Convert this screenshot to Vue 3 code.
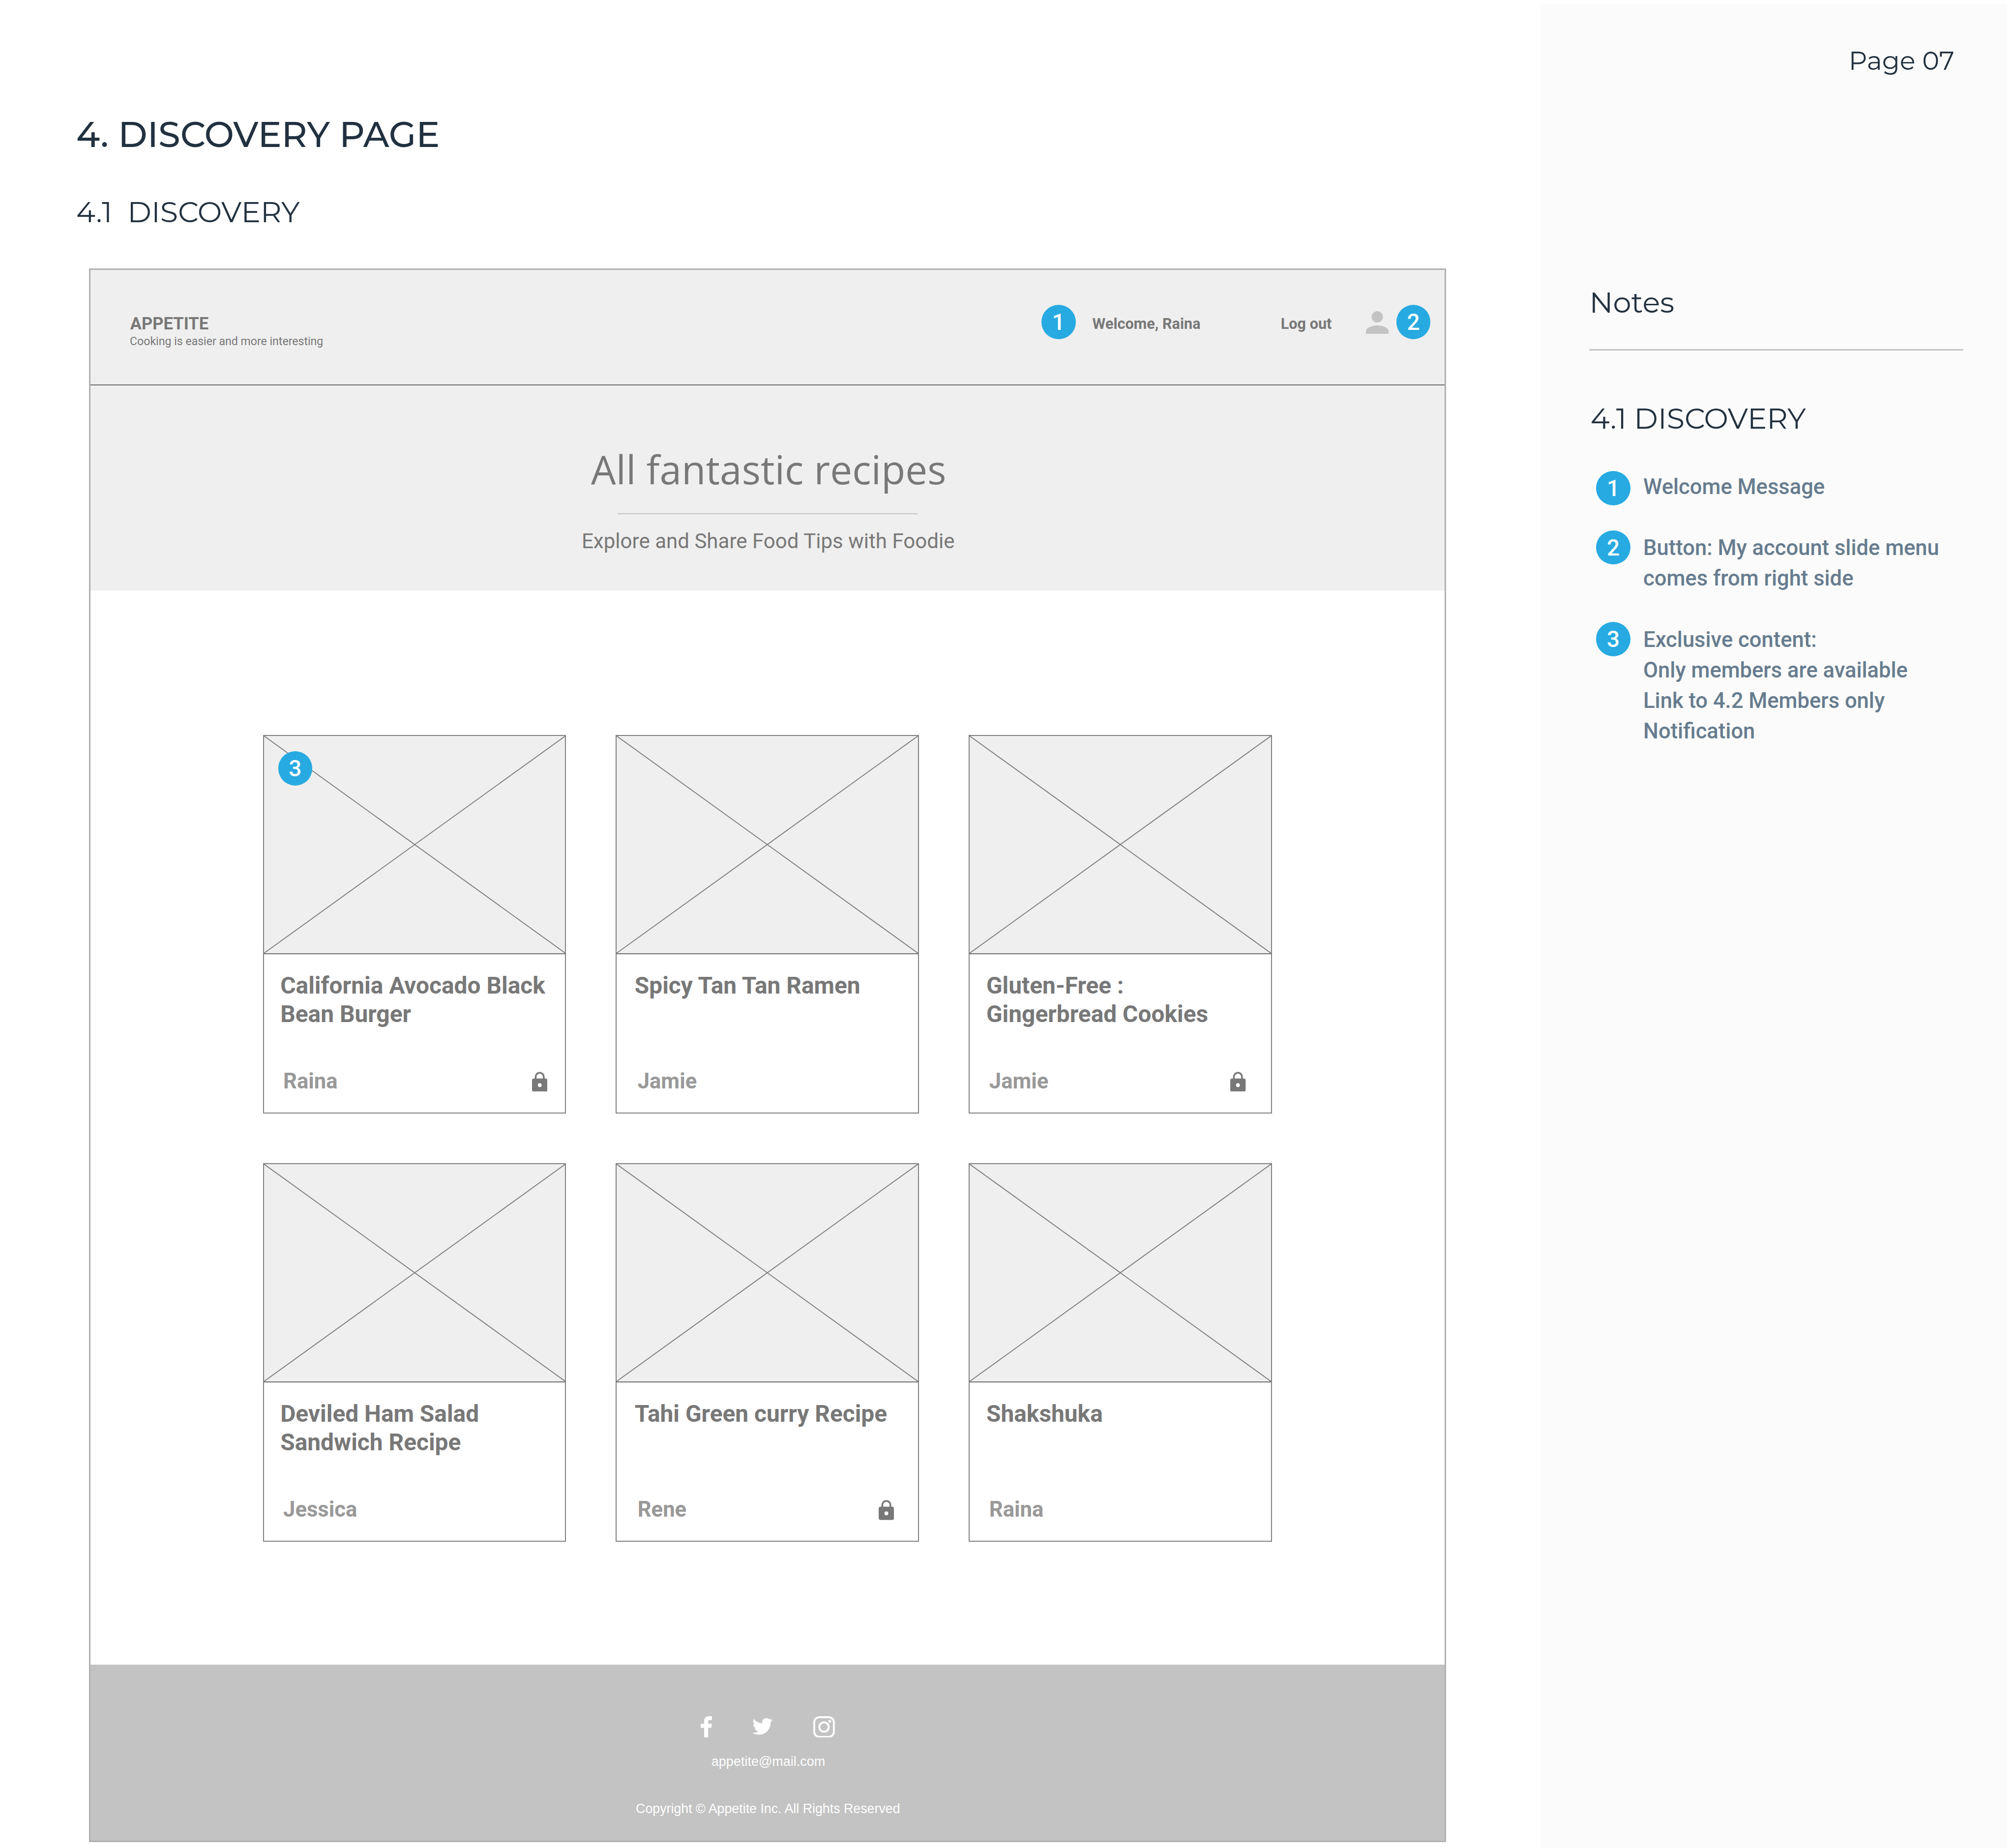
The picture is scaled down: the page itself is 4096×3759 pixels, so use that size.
<script setup>
const recipes = [
  { title: ['California Avocado Black', 'Bean Burger'], author: 'Raina', locked: true, note: 3 },
  { title: ['Spicy Tan Tan Ramen'], author: 'Jamie' },
  { title: ['Gluten-Free :', 'Gingerbread Cookies'], author: 'Jamie', locked: true },
  { title: ['Deviled Ham Salad', 'Sandwich Recipe'], author: 'Jessica' },
  { title: ['Tahi Green curry Recipe'], author: 'Rene', locked: true },
  { title: ['Shakshuka'], author: 'Raina' },
]

const notes = [
  { id: 1, lines: ['Welcome Message'] },
  { id: 2, lines: ['Button: My account slide menu', 'comes from right side'] },
  {
    id: 3,
    lines: ['Exclusive content:', 'Only members are available', 'Link to 4.2 Members only', 'Notification'],
  },
]
</script>

<template>
  <div class="sheet">
    <main class="main">
      <h1 class="title">4. DISCOVERY PAGE</h1>
      <h2 class="subtitle">4.1&nbsp; DISCOVERY</h2>

      <div class="frame">
        <header class="header">
          <div class="brand">
            <div class="brand-name">APPETITE</div>
            <div class="brand-tagline">Cooking is easier and more interesting</div>
          </div>
          <nav class="nav">
            <span class="badge">1</span>
            <span class="welcome">Welcome, Raina</span>
            <span class="logout">Log out</span>
            <svg class="person" viewBox="4 4 16 16">
              <path d="M12 12c2.21 0 4-1.79 4-4s-1.79-4-4-4-4 1.79-4 4 1.79 4 4 4zm0 2c-2.67 0-8 1.34-8 4v2h16v-2c0-2.66-5.33-4-8-4z" />
            </svg>
            <span class="badge">2</span>
          </nav>
        </header>

        <section class="hero">
          <div class="hero-title">All fantastic recipes</div>
          <div class="hero-rule"></div>
          <div class="hero-text">Explore and Share Food Tips with Foodie</div>
        </section>

        <section class="grid">
          <article v-for="(recipe, i) in recipes" :key="i" class="card">
            <div class="picture">
              <svg class="cross" viewBox="0 0 782 565" preserveAspectRatio="none">
                <path d="M0 0L782 565M782 0L0 565" />
              </svg>
              <span v-if="recipe.note" class="badge pinned">{{ recipe.note }}</span>
            </div>
            <div class="card-title">
              <div v-for="line in recipe.title" :key="line">{{ line }}</div>
            </div>
            <div class="card-foot">
              <span class="author">{{ recipe.author }}</span>
              <svg v-if="recipe.locked" class="lock" viewBox="0 0 40 52">
                <path
                  fill-rule="evenodd"
                  d="M35 17.5h-2.2V13a12.8 12.8 0 0 0-25.6 0v4.500H5a5 5 0 0 0-5 5V47a5 5 0 0 0 5 5h30a5 5 0 0 0 5-5V22.500a5 5 0 0 0-5-5zM11.800 13a8.200 8.200 0 0 1 16.400 0v4.500H11.800zM20 39.800a5 5 0 1 1 0-10 5 5 0 0 1 0 10z"
                />
              </svg>
            </div>
          </article>
        </section>

        <footer class="footer">
          <div class="social">
            <svg class="facebook" viewBox="0 0 30 56">
              <path d="M9 56V30H0V19.500H9V13C9 4.500 13.500 0 21.500 0H30V10H24.500C20.500 10 19.500 12 19.500 15V19.500H29L27.700 30H19.500V56z" />
            </svg>
            <svg class="twitter" viewBox="0 3 24 19.500">
              <path d="M23.953 4.570a10 10 0 01-2.825.775 4.958 4.958 0 002.163-2.723c-.951.555-2.005.959-3.127 1.184a4.920 4.920 0 00-8.384 4.482C7.690 8.095 4.067 6.130 1.640 3.162a4.822 4.822 0 00-.666 2.475c0 1.710.870 3.213 2.188 4.096a4.904 4.904 0 01-2.228-.616v.060a4.923 4.923 0 003.946 4.827 4.996 4.996 0 01-2.212.085 4.936 4.936 0 004.604 3.417 9.867 9.867 0 01-6.102 2.105c-.390 0-.779-.023-1.170-.067a13.995 13.995 0 007.557 2.209c9.053 0 13.998-7.496 13.998-13.985 0-.210 0-.420-.015-.630A9.935 9.935 0 0024 4.590z" />
            </svg>
            <svg class="instagram" viewBox="0 0 56 56">
              <rect x="2.500" y="2.500" width="51" height="51" rx="13" />
              <circle cx="28" cy="28" r="12.200" />
              <circle class="dot" cx="43" cy="13" r="3.600" />
            </svg>
          </div>
          <div class="mail">appetite@mail.com</div>
          <div class="copyright">Copyright © Appetite Inc. All Rights Reserved</div>
        </footer>
      </div>
    </main>

    <aside class="side">
      <div class="page-number">Page 07</div>
      <div class="notes-title">Notes</div>
      <div class="notes-rule"></div>
      <div class="notes-section">4.1 DISCOVERY</div>
      <ul class="notes">
        <li v-for="note in notes" :key="note.id" class="note">
          <span class="badge">{{ note.id }}</span>
          <div class="note-text">
            <div v-for="line in note.lines" :key="line">{{ line }}</div>
          </div>
        </li>
      </ul>
    </aside>
  </div>
</template>

<style>
html {
  font-size: 78.2875px;
}
body {
  margin: 0;
  background: #fff;
}
</style>

<style scoped>
.sheet {
  display: flex;
  width: 52.32rem;
  height: 3759px;
  overflow: hidden;
  background: #fff;
  font-family: Roboto, sans-serif;
  white-space: nowrap;
}
.sheet * {
  box-sizing: border-box;
}
.main {
  flex: none;
  width: 40.02rem;
  padding-left: 1.98rem;
}
.title,
.subtitle,
.page-number,
.notes-title,
.notes-section {
  margin: 0;
  color: #22313f;
  font-family: Montserrat, sans-serif;
  font-weight: 400;
  line-height: 1rem;
}
.title {
  margin-top: 2.985rem;
  font-size: 0.919rem;
  font-weight: 500;
}
.subtitle {
  margin-top: 1.02rem;
  font-size: 0.754rem;
}
.frame {
  width: 35.26rem;
  height: 40.89rem;
  margin-top: 0.965rem;
  margin-left: 0.33rem;
  border: 0.04rem solid #b0b0b0;
  color: #787878;
}

.badge {
  flex: none;
  display: block;
  width: 0.89rem;
  height: 0.89rem;
  border-radius: 50%;
  background: #27aae1;
  color: #fff;
  font-size: 0.586rem;
  font-weight: 500;
  line-height: 0.905rem;
  text-align: center;
}

.header {
  display: flex;
  justify-content: space-between;
  height: 3.01rem;
  padding-right: 0.37rem;
  padding-left: 1.035rem;
  border-bottom: 0.03rem solid #707070;
  background: #efefef;
}
.brand {
  padding-top: 1.15rem;
}
.brand-name {
  font-size: 0.441rem;
  font-weight: 700;
  line-height: 0.5rem;
}
.brand-tagline {
  margin-top: 0.015rem;
  margin-left: -0.01rem;
  font-size: 0.295rem;
  line-height: 0.4rem;
}
.nav {
  display: flex;
  height: 0.89rem;
  margin-top: 0.91rem;
  font-size: 0.391rem;
  font-weight: 700;
  line-height: 1rem;
}
.welcome {
  width: 4.895rem;
  margin-left: 0.435rem;
}
.logout {
  width: 2.21rem;
}
.person {
  width: 0.59rem;
  height: 0.59rem;
  margin-top: 0.165rem;
  margin-right: 0.2rem;
  fill: #c3c3c3;
}

.hero {
  height: 5.32rem;
  padding-top: 1.46rem;
  background: #efefef;
  text-align: center;
}
.hero-title {
  padding-left: 0.06rem;
  font-family: "Open Sans", "Noto Sans", sans-serif;
  font-size: 1.022rem;
  line-height: 1.4rem;
  letter-spacing: 0.002rem;
}
.hero-rule {
  width: 7.8rem;
  height: 0.025rem;
  margin: 0.46rem auto 0;
  background: #c3c3c3;
}
.hero-text {
  margin-top: 0.36rem;
  padding-left: 0.03rem;
  font-size: 0.5375rem;
  line-height: 0.7rem;
}

.grid {
  display: grid;
  grid-template-columns: repeat(3, 7.88rem);
  gap: 1.3rem 1.29rem;
  padding: 3.76rem 0 3.19rem 4.48rem;
}
.card {
  height: 9.83rem;
  border: 0.03rem solid #808080;
  background: #fff;
}
.picture {
  position: relative;
  height: 5.67rem;
  border-bottom: 0.03rem solid #707070;
  background: #efefef;
}
.cross {
  display: block;
  width: 100%;
  height: 100%;
  fill: none;
  stroke: #808080;
  stroke-width: 2.5;
}
.pinned {
  position: absolute;
  top: 0.4rem;
  left: 0.37rem;
}
.card-title {
  height: 3.015rem;
  padding-top: 0.46rem;
  padding-left: 0.43rem;
  font-size: 0.6115rem;
  font-weight: 700;
  line-height: 0.735rem;
}
.card-foot {
  display: flex;
  justify-content: space-between;
  padding-right: 0.46rem;
  padding-left: 0.505rem;
}
.card:nth-child(3n + 2) .card-title {
  padding-left: 0.465rem;
}
.card:nth-child(3n + 2) .card-foot {
  padding-right: 0.625rem;
  padding-left: 0.54rem;
}
.card:nth-child(3n) .card-foot {
  padding-right: 0.66rem;
}
.author {
  color: #999;
  font-size: 0.557rem;
  font-weight: 700;
  line-height: 0.6rem;
}
.lock {
  width: 0.4rem;
  height: 0.52rem;
  margin-top: 0.035rem;
  fill: #787878;
}

.footer {
  height: 4.57rem;
  background: #c3c3c3;
  color: #fff;
  font-family: "Liberation Sans", Arial, sans-serif;
  text-align: center;
}
.social {
  display: flex;
  align-items: center;
  height: 1.9rem;
  padding-top: 1.34rem;
  padding-left: 15.85rem;
  fill: #fff;
}
.facebook {
  width: 0.3rem;
  height: 0.56rem;
}
.twitter {
  width: 0.53rem;
  height: 0.46rem;
  margin-left: 1.04rem;
}
.instagram {
  width: 0.56rem;
  height: 0.56rem;
  margin-left: 1.065rem;
  fill: none;
  stroke: #fff;
  stroke-width: 5;
}
.dot {
  fill: #fff;
  stroke: none;
}
.mail {
  margin-top: 0.425rem;
  font-size: 0.345rem;
  line-height: 0.4rem;
  padding-left: 0.04rem;
}
.copyright {
  margin-top: 0.827rem;
  font-size: 0.342rem;
  line-height: 0.4rem;
  padding-left: 0.02rem;
}

.side {
  flex: none;
  width: 12.12rem;
  height: 48rem;
  margin-top: 0.09rem;
  padding-left: 1.27rem;
  background: #fbfbfb;
}
.page-number {
  margin-top: 0.98rem;
  padding-right: 1.37rem;
  font-size: 0.672rem;
  text-align: right;
}
.notes-title {
  margin-top: 5.285rem;
  font-size: 0.755rem;
}
.notes-rule {
  width: 9.72rem;
  height: 0.04rem;
  margin-top: 0.71rem;
  background: #c3c3c3;
}
.notes-section {
  margin-top: 1.265rem;
  margin-left: 0.03rem;
  font-size: 0.752rem;
}
.notes {
  margin: 0.895rem 0 0;
  padding: 0 0 0 0.175rem;
  list-style: none;
}
.note {
  display: flex;
  margin-bottom: 0.79rem;
}
.note .badge {
  margin-top: -0.07rem;
  margin-bottom: -0.2rem;
}
.note:first-child .badge {
  margin-top: -0.025rem;
}
.note-text {
  margin-left: 0.335rem;
  color: #677c8e;
  font-size: 0.556rem;
  font-weight: 500;
  line-height: 0.795rem;
}
</style>
